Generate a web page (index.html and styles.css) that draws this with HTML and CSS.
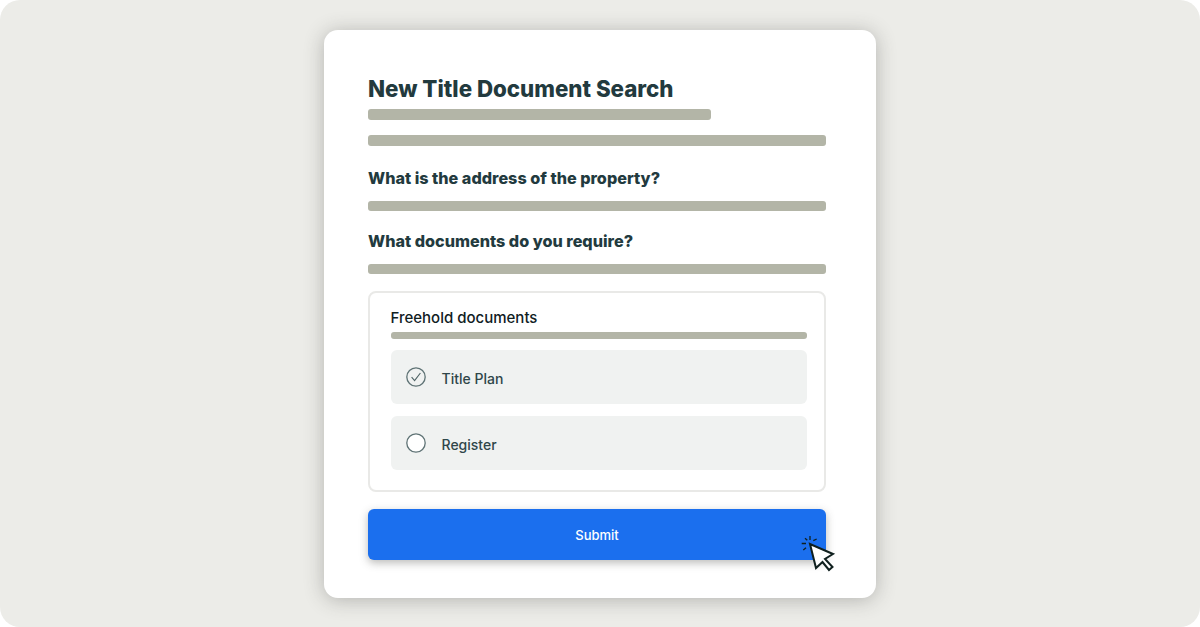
FILE: index.html
```html
<!DOCTYPE html>
<html lang="en">
<head>
<meta charset="utf-8">
<title>New Title Document Search</title>
<link rel="stylesheet" href="styles.css">
</head>
<body>
<main class="page">
  <section class="card">
    <h1 class="title">New Title Document Search</h1>
    <div class="bar bar-short"></div>
    <div class="bar bar-second"></div>
    <h2 class="question q1">What is the address of the property?</h2>
    <div class="bar"></div>
    <h2 class="question q2">What documents do you require?</h2>
    <div class="bar"></div>
    <div class="group">
      <h3 class="group-title">Freehold documents</h3>
      <div class="group-bar"></div>
      <div class="option">
        <svg class="radio" viewBox="0 0 20 20" width="20" height="20"><circle cx="10" cy="10" r="9.2" fill="none" stroke="#5f7375" stroke-width="1.3"/><path d="M5.6 10.2l3 3.4L14.4 6" fill="none" stroke="#4d6264" stroke-width="1.1"/></svg>
        <span class="label">Title Plan</span>
      </div>
      <div class="option">
        <svg class="radio" viewBox="0 0 20 20" width="20" height="20"><circle cx="10" cy="10" r="9.2" fill="#fff" stroke="#5f7375" stroke-width="1.3"/></svg>
        <span class="label">Register</span>
      </div>
    </div>
    <div class="submit-wrap">
      <button class="submit" type="button">Submit</button>
      <svg class="cursor" viewBox="0 0 38 40" width="38" height="40">
        <path d="M12 10L18 34l6.5-6L31 36l3.5-3L27 25l8-5z" fill="#fff" stroke="#10201f" stroke-width="2" stroke-linejoin="miter"/>
        <path d="M12 2v4M3.7 9.5H8M7 4.3l2.3 2M15.3 6.7L18.7 5M5.3 16L8 13.7" fill="none" stroke="#10201f" stroke-width="1.3"/>
      </svg>
    </div>
  </section>
</main>
</body>
</html>
```

FILE: styles.css
```css
* { box-sizing: border-box; }
html, body { margin: 0; padding: 0; background: #fff; }
.page {
  width: 1200px;
  height: 627px;
  background: #ecece8;
  border-radius: 20px;
  padding-top: 30px;
  overflow: hidden;
  font-family: Inter, "Liberation Sans", sans-serif;
}
.card {
  width: 552px;
  height: 568px;
  margin: 0 auto;
  background: #fff;
  border-radius: 14px;
  padding: 44px 50px 0 44px;
  box-shadow: 0 2px 20px rgba(60, 60, 55, 0.32);
}
.title {
  margin: 0 0 6px;
  height: 29px;
  font-size: 22.3px;
  line-height: 29px;
  font-weight: 800;
  color: #223a3e;
}
.bar { height: 10px; border-radius: 3px; background: #b3b5a7; }
.bar-short { width: 343px; height: 11px; }
.bar-second { height: 11px; margin-top: 15px; }
.question {
  margin: 0;
  font-size: 16.2px;
  line-height: 22px;
  font-weight: 800;
  color: #223a3e;
}
.q1 { margin-top: 21px; margin-bottom: 12px; }
.q2 { margin-top: 19px; margin-bottom: 12px; }
.group {
  margin-top: 17px;
  height: 201px;
  border: 2px solid #e9e9e7;
  border-radius: 8px;
  padding: 15px 17px 0 20.5px;
}
.group-title {
  margin: 0;
  font-size: 15px;
  line-height: 20px;
  font-weight: 500;
  color: #10201f;
}
.group-bar { height: 7px; margin-top: 4px; border-radius: 3px; background: #b3b5a7; }
.option {
  display: flex;
  align-items: center;
  gap: 16px;
  height: 54px;
  margin-top: 11px;
  padding-left: 15px;
  background: #f0f2f1;
  border-radius: 6px;
  font-size: 14px;
  font-weight: 500;
  color: #2f4649;
}
.option + .option { margin-top: 12px; }
.radio { flex: none; }
.label { padding-top: 2px; }
.submit-wrap { position: relative; margin-top: 17px; }
.submit {
  display: block;
  width: 100%;
  height: 51px;
  border: 0;
  border-radius: 6px;
  background: #1b6fee;
  color: #fff;
  font-family: inherit;
  font-size: 13px;
  font-weight: 500;
  box-shadow: 0 3px 8px rgba(60, 60, 55, 0.35);
}
.cursor { position: absolute; left: 430px; top: 25px; }
```
